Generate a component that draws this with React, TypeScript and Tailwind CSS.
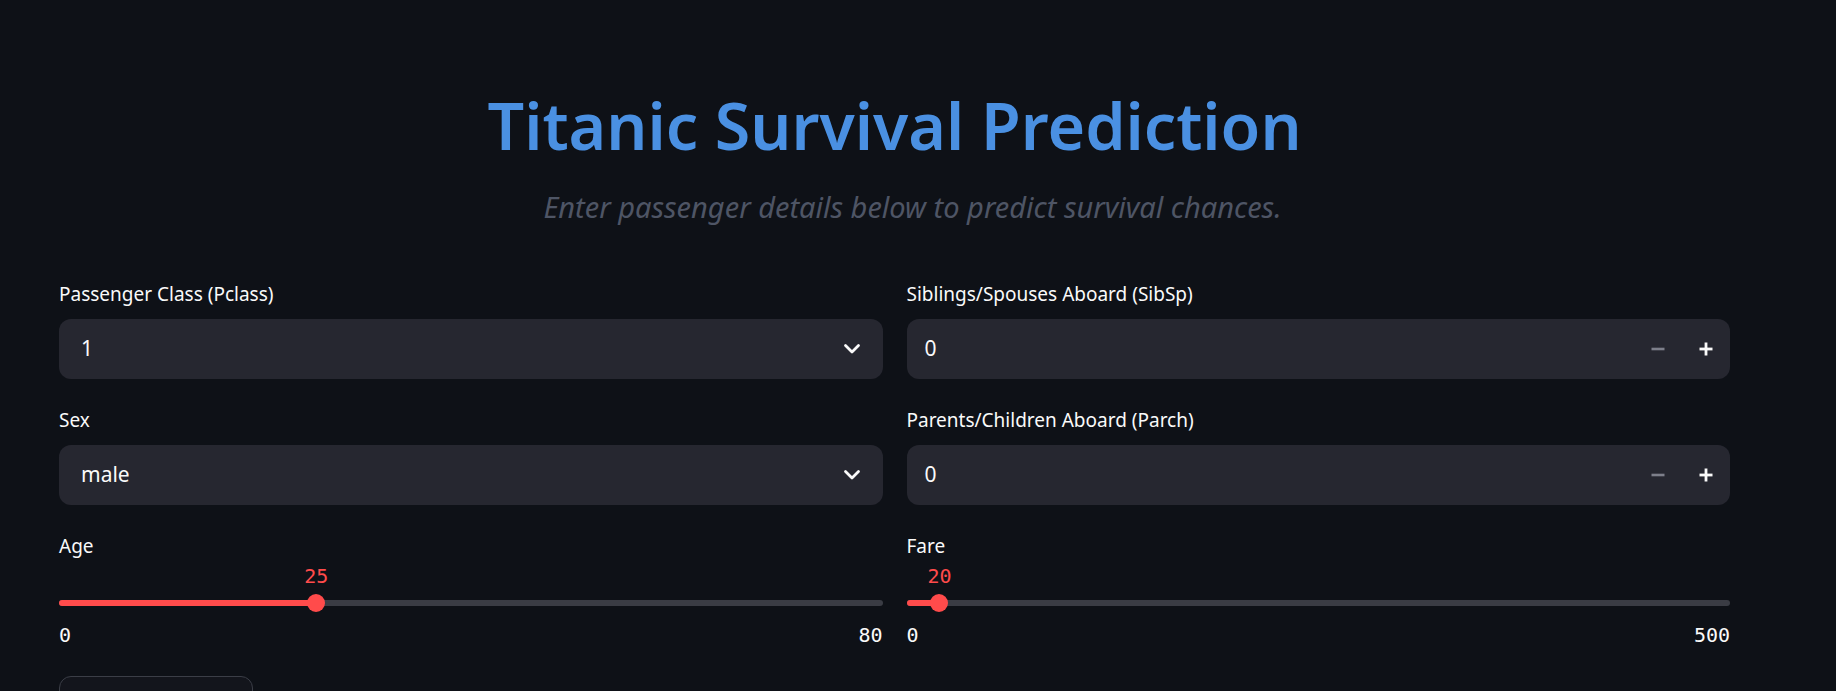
import React from "react"

const sans = { fontFamily: '"Noto Sans", "Open Sans", sans-serif' }

function Label({ children }: { children: React.ReactNode }) {
  return (
    <div className="h-[42px] pt-[2px] text-[19px] leading-[30px] text-[#fafafa]">
      {children}
    </div>
  )
}

function Chevron() {
  return (
    <svg width="18" height="12" viewBox="0 0 18 12" fill="none">
      <path d="M2.5 2.5l6.5 6.5 6.5-6.5" stroke="#fafafa" strokeWidth="2.8" strokeLinecap="round" strokeLinejoin="round" />
    </svg>
  )
}

function SelectBox({ label, value }: { label: string; value: string }) {
  return (
    <div>
      <Label>{label}</Label>
      <div className="flex h-[60px] items-center justify-between rounded-[12px] bg-[#262730] pl-[22px] pr-[22px]">
        <span className="text-[21px] text-[#fafafa]">{value}</span>
        <Chevron />
      </div>
    </div>
  )
}

function NumberBox({ label, value }: { label: string; value: string }) {
  return (
    <div>
      <Label>{label}</Label>
      <div className="flex h-[60px] items-center rounded-[12px] bg-[#262730] pl-[18px]">
        <span className="flex-1 text-[21px] text-[#fafafa]">{value}</span>
        <div className="flex h-full">
          <button className="flex w-[48px] items-center justify-center">
            <svg width="14" height="14" viewBox="0 0 14 14">
              <rect x="0.5" y="5.7" width="13" height="2.6" fill="#7d7f8a" />
            </svg>
          </button>
          <button className="flex w-[48px] items-center justify-center">
            <svg width="14" height="14" viewBox="0 0 14 14">
              <rect x="0.5" y="5.6" width="13" height="2.8" fill="#fafafa" />
              <rect x="5.6" y="0.5" width="2.8" height="13" fill="#fafafa" />
            </svg>
          </button>
        </div>
      </div>
    </div>
  )
}

function Slider({ label, value, min, max }: { label: string; value: number; min: number; max: number }) {
  const pct = ((value - min) / (max - min)) * 100
  return (
    <div>
      <Label>{label}</Label>
      <div className="relative h-[64px]" style={{ fontFamily: '"DejaVu Sans Mono", monospace' }}>
        {/* value bubble */}
        <div
          className="absolute top-[-9px] -translate-x-1/2 text-[20px] leading-[28px] text-[#ff4b4b]"
          style={{ left: `${pct}%` }}
        >
          {value}
        </div>
        {/* track */}
        <div className="absolute left-0 right-0 top-[29px] h-[6px] rounded-full bg-[#3a3c44]" />
        <div className="absolute left-0 top-[29px] h-[6px] rounded-full bg-[#ff4b4b]" style={{ width: `${pct}%` }} />
        <div
          className="absolute top-[23px] h-[18px] w-[18px] -translate-x-1/2 rounded-full bg-[#ff4b4b]"
          style={{ left: `${pct}%` }}
        />
        <div className="absolute left-0 right-0 top-[50px] flex justify-between text-[20px] leading-[28px] text-[#fafafa]">
          <span>{min}</span>
          <span>{max}</span>
        </div>
      </div>
    </div>
  )
}

export default function App() {
  return (
    <div className="h-screen overflow-hidden bg-[#0e1117]" style={sans}>
      <div className="ml-[59px] w-[1671px]">
        <h1 className="pt-[85px] text-center text-[64.5px] font-semibold leading-[80px] text-[#4a90e2]">
          Titanic Survival Prediction
        </h1>
        <p className="mt-[24px] pl-[36px] text-center text-[29px] italic leading-[36px] text-[#4e5565]">
          Enter passenger details below to predict survival chances.
        </p>

        <div className="mt-[52px] grid grid-cols-2 gap-x-[24px]">
          <div className="flex flex-col gap-[24px]">
            <SelectBox label="Passenger Class (Pclass)" value="1" />
            <SelectBox label="Sex" value="male" />
            <Slider label="Age" value={25} min={0} max={80} />
          </div>
          <div className="flex flex-col gap-[24px]">
            <NumberBox label="Siblings/Spouses Aboard (SibSp)" value="0" />
            <NumberBox label="Parents/Children Aboard (Parch)" value="0" />
            <Slider label="Fare" value={20} min={0} max={500} />
          </div>
        </div>

        {/* predict button, only its top edge is on screen */}
        <button
          aria-label="Predict Survival"
          className="mt-[41px] block h-[57px] w-[194px] rounded-[12px] border border-[#3b3e47] bg-[#13151c]"
        />
      </div>
    </div>
  )
}
